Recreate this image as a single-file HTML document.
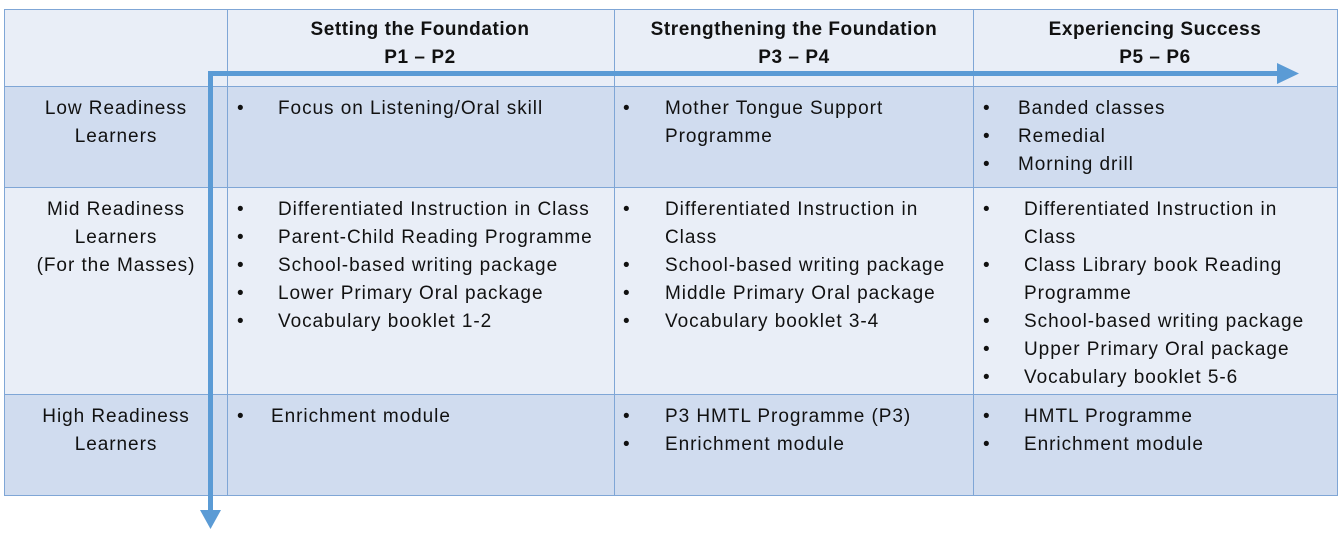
<!DOCTYPE html><html><head><style>
body{margin:0;width:1342px;height:540px;background:#fff;position:relative;font-family:"Liberation Sans",sans-serif;font-size:19px;letter-spacing:0.95px;color:#111;overflow:hidden}
.c{position:absolute;box-sizing:border-box;border:1px solid #7fa6d6}
.t{position:absolute;line-height:28px;white-space:nowrap}
.h{font-weight:bold;text-align:center;width:360px;letter-spacing:0.55px}
</style></head><body>
<div class="c" style="left:4px;top:9px;width:224px;height:78px;background:#e9eef7"></div>
<div class="c" style="left:227px;top:9px;width:388px;height:78px;background:#e9eef7"></div>
<div class="c" style="left:614px;top:9px;width:360px;height:78px;background:#e9eef7"></div>
<div class="c" style="left:973px;top:9px;width:365px;height:78px;background:#e9eef7"></div>
<div class="c" style="left:4px;top:86px;width:224px;height:102px;background:#d0dcef"></div>
<div class="c" style="left:227px;top:86px;width:388px;height:102px;background:#d0dcef"></div>
<div class="c" style="left:614px;top:86px;width:360px;height:102px;background:#d0dcef"></div>
<div class="c" style="left:973px;top:86px;width:365px;height:102px;background:#d0dcef"></div>
<div class="c" style="left:4px;top:187px;width:224px;height:208px;background:#e9eef7"></div>
<div class="c" style="left:227px;top:187px;width:388px;height:208px;background:#e9eef7"></div>
<div class="c" style="left:614px;top:187px;width:360px;height:208px;background:#e9eef7"></div>
<div class="c" style="left:973px;top:187px;width:365px;height:208px;background:#e9eef7"></div>
<div class="c" style="left:4px;top:394px;width:224px;height:102px;background:#d0dcef"></div>
<div class="c" style="left:227px;top:394px;width:388px;height:102px;background:#d0dcef"></div>
<div class="c" style="left:614px;top:394px;width:360px;height:102px;background:#d0dcef"></div>
<div class="c" style="left:973px;top:394px;width:365px;height:102px;background:#d0dcef"></div>

<div class="t h" style="left:240px;top:16px">Setting the Foundation<br>P1 – P2</div>
<div class="t h" style="left:614px;top:16px">Strengthening the Foundation<br>P3 – P4</div>
<div class="t h" style="left:975px;top:16px">Experiencing Success<br>P5 – P6</div>

<div class="t" style="left:4px;width:224px;text-align:center;top:95px">Low Readiness<br>Learners</div>
<div class="t" style="left:4px;width:224px;text-align:center;top:196px">Mid Readiness<br>Learners<br>(For the Masses)</div>
<div class="t" style="left:4px;width:224px;text-align:center;top:403px">High Readiness<br>Learners</div>

<div class="t" style="left:237px;top:95px">•</div><div class="t" style="left:278px;top:95px">Focus on Listening/Oral skill</div>
<div class="t" style="left:623px;top:95px">•</div><div class="t" style="left:665px;top:95px">Mother Tongue Support<br>Programme</div>
<div class="t" style="left:983px;top:95px">•<br>•<br>•</div><div class="t" style="left:1018px;top:95px">Banded classes<br>Remedial<br>Morning drill</div>

<div class="t" style="left:237px;top:196px">•<br>•<br>•<br>•<br>•</div><div class="t" style="left:278px;top:196px">Differentiated Instruction in Class<br>Parent-Child Reading Programme<br>School-based writing package<br>Lower Primary Oral package<br>Vocabulary booklet 1-2</div>
<div class="t" style="left:623px;top:196px">•<br><br>•<br>•<br>•</div><div class="t" style="left:665px;top:196px">Differentiated Instruction in<br>Class<br>School-based writing package<br>Middle Primary Oral package<br>Vocabulary booklet 3-4</div>
<div class="t" style="left:983px;top:196px">•<br><br>•<br><br>•<br>•<br>•</div><div class="t" style="left:1024px;top:196px">Differentiated Instruction in<br>Class<br>Class Library book Reading<br>Programme<br>School-based writing package<br>Upper Primary Oral package<br>Vocabulary booklet 5-6</div>

<div class="t" style="left:237px;top:403px">•</div><div class="t" style="left:271px;top:403px">Enrichment module</div>
<div class="t" style="left:623px;top:403px">•<br>•</div><div class="t" style="left:665px;top:403px">P3 HMTL Programme (P3)<br>Enrichment module</div>
<div class="t" style="left:983px;top:403px">•<br>•</div><div class="t" style="left:1024px;top:403px">HMTL Programme<br>Enrichment module</div>

<svg style="position:absolute;left:0;top:0" width="1342" height="540">
<g fill="#5b9bd5">
<rect x="208" y="71" width="1072" height="5"/>
<polygon points="1277,63 1299,73.5 1277,84"/>
<rect x="208" y="71" width="5" height="442"/>
<polygon points="200,510 221,510 210.5,529"/>
</g></svg>
</body></html>
